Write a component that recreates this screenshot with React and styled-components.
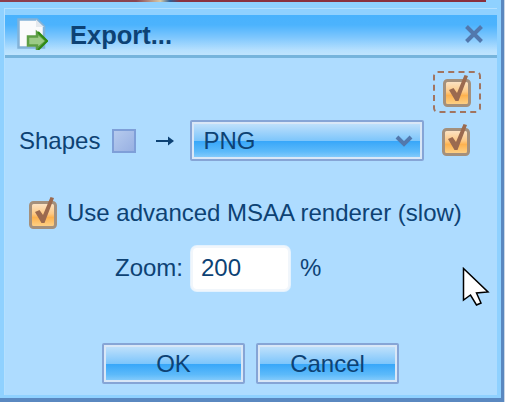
import React from "react";
import styled, { createGlobalStyle } from "styled-components";

const Global = createGlobalStyle`
  html, body { margin: 0; padding: 0; width: 505px; height: 402px; overflow: hidden; background: #c9d6e6; }
  * { box-sizing: border-box; }
`;
const Scene = styled.div`
  position: relative;
  width: 505px;
  height: 402px;
  display: flex;
  font-family: "Liberation Sans", Arial, sans-serif;
  color: #0d4274;
`;
const Backdrop = styled.div`
  position: absolute;
  left: 0;
  top: 0;
  width: 486px;
  height: 2px;
  background: linear-gradient(90deg, #8d3d4c 0%, #8a4450 28%, #d8c9a6 33%, #2d5f96 35%, #8a3240 37%, #8a2f3c 100%);
`;
const Frame = styled.div`
  flex: 1;
  max-width: 504px;
  display: flex;
  flex-direction: column;
  padding: 8px 4px 3px 4px;
  background: #8fd1ff;
  border-right: 3px solid #5a88c0;
  border-bottom: 4px solid #5a88c0;
`;
const Inner = styled.div`
  flex: 1;
  display: flex;
  flex-direction: column;
  border-top: 1px solid #b4e0ff;
  border-left: 1px solid #b4e0ff;
  padding-top: 6px;
  background: linear-gradient(#8fd1ff 6px, #aedcff 6px);
`;
const TitleBar = styled.div`
  height: 43px;
  display: flex;
  align-items: center;
  padding-left: 12px;
  background: linear-gradient(180deg, #48b2fd 0%, #4cb3fd 25%, #7cc6fd 55%, #b6e0fe 88%, #bfe4fe 100%);
  border-bottom: 3px solid #76b4dc;
`;
const TitleIcon = styled.svg`
  width: 31px;
  height: 32px;
  flex: none;
  margin-top: -3px;
`;
const TitleText = styled.div`
  margin-left: 22px;
  font-size: 25.5px;
  font-weight: 700;
  color: #0d4274;
`;
const Close = styled.svg`
  width: 18px;
  height: 18px;
  margin-left: auto;
  margin-right: 14px;
  margin-top: -3px;
`;
const Body = styled.div`
  flex: 1;
  display: flex;
  flex-direction: column;
`;
const FocusRow = styled.div`
  display: flex;
  justify-content: flex-end;
  padding: 13px 16px 0 0;
`;
const FocusBox = styled.div`
  width: 48px;
  height: 42px;
  border: 2px dashed #a2745f;
  border-radius: 5px;
  display: flex;
  align-items: flex-start;
  padding-top: 2px;
  justify-content: center;
`;
const ExportRow = styled.div`
  display: flex;
  align-items: center;
  padding-left: 14px;
  margin-top: 7px;
  height: 41px;
  font-size: 24px;
`;
const Swatch = styled.div`
  width: 24px;
  height: 24px;
  margin-left: 12px;
  border: 2px solid #7f9fd8;
  background: linear-gradient(135deg, #b6cbee, #98b0e2);
`;
const Arrow = styled.svg`
  width: 18px;
  height: 12px;
  margin-left: 20px;
`;
const Gloss = `
  border: 2px solid #86a5d6;
  box-shadow: inset 0 0 0 2px #d9e7f7;
  border-radius: 2px;
  color: #0d4274;
  font-family: "Liberation Sans", Arial, sans-serif;
  font-size: 24px;
  background: linear-gradient(180deg, #c6e3fb 0%, #7ec6fb 50%, #36a6f9 51%, #5dbafa 80%, #8fd0fc 100%);
`;
const Select = styled.div`
  ${Gloss}
  width: 234px;
  height: 41px;
  margin-left: 16px;
  display: flex;
  align-items: center;
  padding: 0 9px 0 11px;
  justify-content: space-between;
`;
const Chevron = styled.svg`
  width: 18px;
  height: 12px;
`;
const RowCheck = styled.div`
  margin-left: 18px;
  margin-top: -1px;
  display: flex;
`;
const CheckRow = styled.div`
  display: flex;
  align-items: center;
  margin-top: 36px;
  padding-left: 24px;
  font-size: 24px;
  height: 32px;
`;
const CheckLabel = styled.span`
  margin-left: 10px;
`;
const ZoomRow = styled.div`
  display: flex;
  align-items: center;
  margin-top: 16px;
  padding-left: 110px;
  height: 46px;
  font-size: 24px;
`;
const ZoomInput = styled.div`
  width: 99px;
  height: 45px;
  margin-left: 8px;
  padding-left: 8px;
  display: flex;
  align-items: center;
  background: #fff;
  border: 2px solid #f1f6fb;
  border-radius: 6px;
  box-shadow: 0 0 0 1px #e4f2fe;
`;
const Percent = styled.span`
  margin-left: 10px;
`;
const Buttons = styled.div`
  margin-top: auto;
  margin-bottom: 11px;
  display: flex;
  gap: 11px;
  padding-left: 97px;
`;
const Button = styled.div`
  ${Gloss}
  width: ${(p) => p.$w}px;
  height: 41px;
  display: flex;
  align-items: center;
  justify-content: center;
`;
const Cursor = styled.svg`
  position: absolute;
  left: 462px;
  top: 267px;
  width: 28px;
  height: 40px;
`;

function Check() {
  return (
    <svg width="28" height="32" viewBox="0 0 28 32" style={{ display: "block", flex: "none" }}>
      <defs>
        <linearGradient id="cb" x1="0" y1="0" x2="0" y2="1">
          <stop offset="0" stopColor="#fbe6cc" />
          <stop offset="0.45" stopColor="#fdc985" />
          <stop offset="0.6" stopColor="#fdb24f" />
          <stop offset="1" stopColor="#fdd58e" />
        </linearGradient>
      </defs>
      <rect x="1.500" y="5.500" width="25" height="25" rx="3" fill="url(#cb)" stroke="#a4907c" strokeWidth="3" />
      <path d="M6 15L10.500 13L14 18L21.500 0L25 1L15.500 26H12.500Z" fill="#9b6a4f" />
    </svg>
  );
}

export default function App() {
  return (
    <Scene>
      <Global />
      <Frame>
        <Inner>
          <TitleBar>
            <TitleIcon viewBox="0 0 31 32">
              <path d="M1.500 1.500H20L27 8.500V29.500H1.500Z" fill="#fafbfc" stroke="#82b2d8" strokeWidth="2.500" />
              <path d="M19 9V1.500L27 9Z" fill="#e4e9ee" />
              <path d="M11 18.500H20V14.500L29.500 23L20 31V27.500H11Z" fill="#9ccb86" stroke="#5d9e45" strokeWidth="2.500" />
              <path d="M21 14L30 23L21 32" fill="none" stroke="#2f8a12" strokeWidth="2" />
            </TitleIcon>
            <TitleText>Export...</TitleText>
            <Close viewBox="0 0 18 18">
              <path d="M1.500 1.500L16.500 16.500M16.500 1.500L1.500 16.500" stroke="#5278ad" strokeWidth="4" />
            </Close>
          </TitleBar>
          <Body>
            <FocusRow>
              <FocusBox><Check /></FocusBox>
            </FocusRow>
            <ExportRow>
              Shapes
              <Swatch />
              <Arrow viewBox="0 0 18 12">
                <path d="M0 6H16" fill="none" stroke="#0d4274" strokeWidth="2" />
                <path d="M12 1.500L18 6L12 10.500Z" fill="#0d4274" />
              </Arrow>
              <Select>
                PNG
                <Chevron viewBox="0 0 18 12">
                  <path d="M2 2L9 9L16 2" fill="none" stroke="#5278ad" strokeWidth="4" />
                </Chevron>
              </Select>
              <RowCheck><Check /></RowCheck>
            </ExportRow>
            <CheckRow>
              <Check />
              <CheckLabel>Use advanced MSAA renderer (slow)</CheckLabel>
            </CheckRow>
            <ZoomRow>
              Zoom:
              <ZoomInput>200</ZoomInput>
              <Percent>%</Percent>
            </ZoomRow>
            <Buttons>
              <Button $w={143}>OK</Button>
              <Button $w={143}>Cancel</Button>
            </Buttons>
          </Body>
        </Inner>
      </Frame>
      <Backdrop />
      <Cursor viewBox="0 0 28 40">
        <path d="M1.500 1.500V33L8.500 28L14.500 38L19 36L14.500 26L26 25Z" fill="#fff" stroke="#000" strokeWidth="1.500" />
      </Cursor>
    </Scene>
  );
}
